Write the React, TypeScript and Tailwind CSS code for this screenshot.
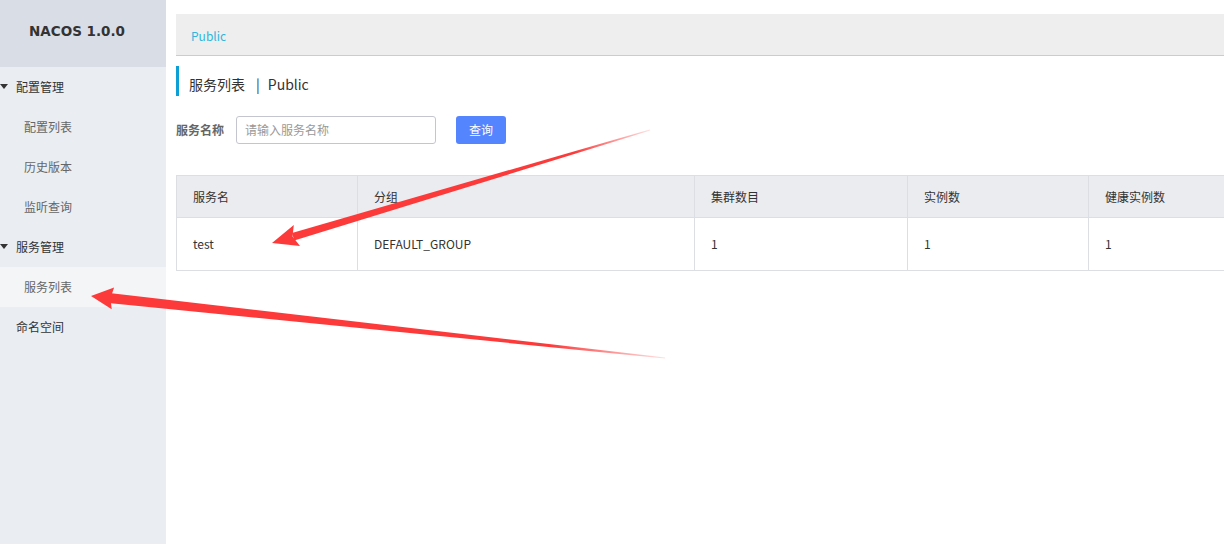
import React from "react";

const menu = [
  { label: "配置管理", top: true },
  { label: "配置列表" },
  { label: "历史版本" },
  { label: "监听查询" },
  { label: "服务管理", top: true },
  { label: "服务列表", active: true },
  { label: "命名空间", top: true, noArrow: true },
];

const cols = ["服务名", "分组", "集群数目", "实例数", "健康实例数"];
const row = ["test", "DEFAULT_GROUP", "1", "1", "1"];

function Arrows() {
  return (
    <svg className="absolute left-0 top-0 pointer-events-none" width="1224" height="544">
      <defs>
        <linearGradient id="g1" gradientUnits="userSpaceOnUse" x1="272" y1="0" x2="650" y2="0">
          <stop offset="0" stopColor="#fd3a3a" />
          <stop offset="0.8" stopColor="#fd3a3a" />
          <stop offset="1" stopColor="#fd3a3a" stopOpacity="0.15" />
        </linearGradient>
        <linearGradient id="g2" gradientUnits="userSpaceOnUse" x1="91" y1="0" x2="665" y2="0">
          <stop offset="0" stopColor="#fd3a3a" />
          <stop offset="0.8" stopColor="#fd3a3a" />
          <stop offset="1" stopColor="#fd3a3a" stopOpacity="0.15" />
        </linearGradient>
      </defs>
      <polygon points="650.2,130.6 649.8,129.4 292,232.9 294.2,240.5" fill="url(#g1)" />
      <polygon points="272,243 293.8,225.1 292.5,236.5 300,246.1" fill="#fd3a3a" />
      <polygon points="664.9,358.6 665.1,357.4 109.4,292.9 108.4,302.9" fill="url(#g2)" />
      <polygon points="91,296 114.1,287.4 110.5,298 111.7,309.3" fill="#fd3a3a" />
    </svg>
  );
}

export default function App() {
  return (
    <div className="relative flex w-screen h-screen overflow-hidden bg-white text-[12px] text-[#333]" style={{ fontFamily: '"Noto Sans CJK SC", "Noto Sans", sans-serif' }}>
      <div className="w-[166px] shrink-0 h-full bg-[#eaedf1] flex flex-col">
        <div className="h-[67px] bg-[#d9dee6] flex items-center justify-center pr-[12px] pb-[4px] text-[13.5px] font-bold text-[#333]" style={{ fontFamily: '"DejaVu Sans", sans-serif' }}>
          NACOS 1.0.0
        </div>
        {menu.map((m) => (
          <div key={m.label} className={`h-[40px] flex items-center relative ${m.active ? "bg-[#f4f5f7]" : ""} ${m.top ? "pl-[16px] text-[#333]" : "pl-[24px] text-[#666]"}`}>
            {m.top && !m.noArrow && (
              <span className="absolute left-0 top-[17px] w-0 h-0 border-l-[4px] border-r-[4px] border-t-[5px] border-l-transparent border-r-transparent border-t-[#333]"></span>
            )}
            {m.label}
          </div>
        ))}
      </div>
      <div className="flex-1 min-w-0 pl-[10px] pt-[14px]">
        <div className="h-[42px] bg-[#eeeeee] border-b border-[#cccccc] flex items-center pl-[15px] pt-[2px] text-[#2fb6dd]">
          Public
        </div>
        <div className="mt-[10px] h-[30px] border-l-[3px] border-[#0b9fd6] flex items-center pl-[10px] pt-[7px] text-[14px] text-[#333]">
          服务列表<span className="ml-[11px] mr-[8px]">|</span>Public
        </div>
        <div className="mt-[20px] flex items-center h-[28px]">
          <span className="font-bold text-[#666] w-[60px]">服务名称</span>
          <div className="w-[200px] h-[28px] border border-[#c4c6cf] rounded-[3px] flex items-center pl-[8px] text-[#999]">
            请输入服务名称
          </div>
          <div className="ml-[20px] w-[50px] h-[28px] rounded-[3px] bg-[#5584ff] text-white flex items-center justify-center">
            查询
          </div>
        </div>
        <div className="mt-[31px] w-[1100px] border border-[#dcdee3]">
          <div className="grid grid-cols-[180px_337px_213px_181px_1fr] bg-[#ebecf0] h-[42px] border-b border-[#dcdee3]">
            {cols.map((c, i) => (
              <div key={c} className={`flex items-center ${i > 0 ? "border-l border-[#dcdee3] pl-[16px]" : "pl-[16px]"}`}>{c}</div>
            ))}
          </div>
          <div className="grid grid-cols-[180px_337px_213px_181px_1fr] h-[52px]">
            {row.map((c, i) => (
              <div key={i} className={`flex items-center ${i > 0 ? "border-l border-[#dcdee3] pl-[16px]" : "pl-[16px]"}`}>{c}</div>
            ))}
          </div>
        </div>
      </div>
      <Arrows />
    </div>
  );
}
